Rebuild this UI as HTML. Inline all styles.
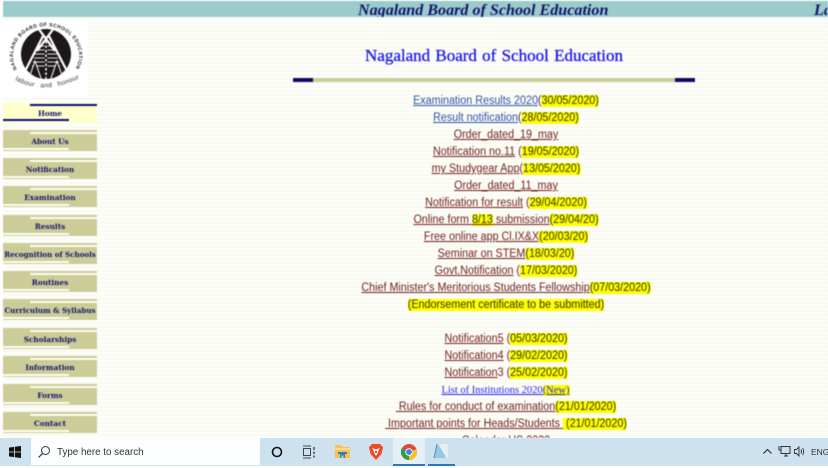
<!DOCTYPE html>
<html><head><meta charset="utf-8">
<style>
html,body{margin:0;padding:0}
body{width:828px;height:466px;overflow:hidden;position:relative;background:#fdfdf6;font-family:"Liberation Sans",sans-serif}
#page{position:absolute;left:0;top:0;width:828px;height:438px;overflow:hidden;filter:blur(.4px);
background:repeating-linear-gradient(0deg,#fefefb 0,#fefefb 2px,#fafaf2 2px,#fafaf2 4px)}
#white{position:absolute;left:0;top:0;width:3px;height:438px;background:#fff}
#bar{position:absolute;left:3px;top:1px;width:825px;height:16px;background:#9bcbcb;overflow:hidden}
.bt{position:absolute;top:-2px;font:italic bold 16.1px/24px "Liberation Serif",serif;color:#14146e;white-space:nowrap}
#h1{position:absolute;left:293px;width:402px;top:46px;text-align:center;font:17px/20px "Liberation Serif",serif;color:#1616ee;-webkit-text-stroke:.3px #1616ee;word-spacing:1px;white-space:nowrap}
#rule{position:absolute;left:293px;top:78px;width:402px;height:4px;background:#cccc99}
#rule i{position:absolute;top:0;width:20px;height:4px;background:#0c0c66}
.l{position:absolute;left:.5px;width:1010px;text-align:center;font-size:11.5px;line-height:17px;color:#702020;white-space:nowrap;transform:scaleX(.934);transform-origin:505px 0}
.l u{color:#702020}
.l u.b{color:#2a55a5}
.l b{font-weight:normal;background:#ffff00;color:#333300}
.n{position:absolute;left:3px;width:94px;height:21px;background:#cccc99;text-align:center;font:bold 7.3px/23px "DejaVu Serif","Liberation Serif",serif;color:#14146e;white-space:nowrap}
.n:before{content:"";position:absolute;left:27px;right:0;top:2px;height:2px;background:#fdfdf0}
.n:after{content:"";position:absolute;left:0;width:66px;top:18px;height:2px;background:#fdfdf0}
.n.h{background:#ffffcc;top:103px;height:20px;line-height:21px}
.n.h:before{background:#0c0c80;top:1px}
.n.h:after{background:#0c0c80;top:16px}
#logo{position:absolute;left:3px;top:21px;width:85px;height:75px;background:#fff}
#task{position:absolute;left:0;top:438px;width:828px;height:28px;background:#cde2ee;filter:blur(.3px)}
#search{position:absolute;left:31px;top:0;width:229px;height:27px;background:#fbfdfe;font-size:9.8px;line-height:30px;color:#333}
#search span{position:absolute;left:26px;white-space:nowrap}
#act{position:absolute;left:393px;top:0;width:32px;height:28px;background:#e4f0f6}
.ul{position:absolute;top:26px;height:2px;background:#2a78c0}
#tray{position:absolute;left:811px;top:0;font-size:8.5px;line-height:28px;color:#333}
svg{position:absolute}
</style></head>
<body>
<div id="page">
<div id="white"></div>
<div id="bar">
<div class="bt" style="left:355px">Nagaland Board of School Education</div>
<div class="bt" style="left:811px">La</div>
</div>

<div id="logo">
<svg width="85" height="75" viewBox="0 0 85 75" style="left:0;top:0">
<defs><clipPath id="c"><circle cx="43" cy="33" r="25"/></clipPath></defs>
<circle cx="43" cy="33" r="25" fill="#1c1818"/>
<g clip-path="url(#c)">
<path d="M35 25h16M33 29h20M32 33h22M31 37h24M30 41h26M29 45h28" stroke="#ddd" stroke-width="1.1"/>
<path d="M43 20V60" stroke="#1c1818" stroke-width="3"/>
<path d="M43 20V60" stroke="#fff" stroke-width="1.5" stroke-dasharray="2.5 2"/>
<path d="M25 60 L32 40 L39 60Z M47 60 L54 40 L61 60Z" fill="#1c1818" stroke="#fff" stroke-width="1"/>
<path d="M35 7 L52 30 M51 7 L34 30" stroke="#fff" stroke-width="2.2"/>
<path d="M40 15 L18 58 M46 15 L68 58" stroke="#fff" stroke-width="2.2"/>
</g>
<path id="arc" d="M14 48 A33 29 0 1 1 72 48" fill="none"/>
<text font-family="Liberation Sans" font-size="5" font-weight="bold" fill="#222" letter-spacing=".45"><textPath href="#arc">NAGALAND BOARD OF SCHOOL EDUCATION</textPath></text>
<path id="arc2" d="M12 59 Q42 75 77 57" fill="none"/>
<text font-family="Liberation Sans" font-size="6.6" fill="#333" letter-spacing=".4" word-spacing="3.5"><textPath href="#arc2">labour and honour</textPath></text>
</svg>
</div>

<div class="n h">Home</div>
<div class="n" style="top:130px">About Us</div>
<div class="n" style="top:158px">Notification</div>
<div class="n" style="top:186px">Examination</div>
<div class="n" style="top:215px">Results</div>
<div class="n" style="top:243px;font-size:7.1px">Recognition of Schools</div>
<div class="n" style="top:271px">Routines</div>
<div class="n" style="top:299px;font-size:7.15px">Curriculum &amp; Syllabus</div>
<div class="n" style="top:328px">Scholarships</div>
<div class="n" style="top:356px">Information</div>
<div class="n" style="top:384px">Forms</div>
<div class="n" style="top:412px">Contact</div>

<div id="h1">Nagaland Board of School Education</div>
<div id="rule"><i style="left:0"></i><i style="right:0"></i></div>

<div class="l" style="top:93px"><u class="b">Examination Results 2020</u>(<b>30/05/2020)</b></div>
<div class="l" style="top:110px"><u class="b">Result notification</u>(<b>28/05/2020)</b></div>
<div class="l" style="top:127px"><u>Order_dated_19_may</u></div>
<div class="l" style="top:144px"><u>Notification no.11</u> (<b>19/05/2020)</b></div>
<div class="l" style="top:161px"><u>my Studygear App</u>(<b>13/05/2020)</b></div>
<div class="l" style="top:178px"><u>Order_dated_11_may</u></div>
<div class="l" style="top:195px"><u>Notification for result</u> (<b>29/04/2020)</b></div>
<div class="l" style="top:212px"><u>Online form <b>8/13</b> submission</u><b>(29/04/20)</b></div>
<div class="l" style="top:229px"><u>Free online app Cl.IX&amp;X</u><b>(20/03/20)</b></div>
<div class="l" style="top:246px"><u>Seminar on STEM</u><b>(18/03/20)</b></div>
<div class="l" style="top:263px"><u>Govt.Notification</u> (<b>17/03/2020)</b></div>
<div class="l" style="top:280px"><u>Chief Minister's Meritorious Students Fellowship</u><b>(07/03/2020)</b></div>
<div class="l" style="top:297px"><b>(Endorsement certificate to be submitted)</b></div>
<div class="l" style="top:331px"><u>Notification5</u> (<b>05/03/2020)</b></div>
<div class="l" style="top:348px"><u>Notification4</u> (<b>29/02/2020)</b></div>
<div class="l" style="top:365px"><u>Notification</u>3 (<b>25/02/2020)</b></div>
<div class="l" style="top:382px;font:10.5px/17px 'Liberation Serif',serif;transform:none"><u style="color:#2222ee">List of Institutions 2020</u><b style="color:#2222ee"><u style="color:#2222ee">(New)</u></b></div>
<div class="l" style="top:399px"><u> &nbsp;Rules for conduct of examination</u><b>(21/01/2020)</b></div>
<div class="l" style="top:416px"><u> &nbsp;Important points for Heads/Students </u><b>&nbsp;(21/01/2020)</b></div>
<div class="l" style="top:433px"><u>Calendar HS 2020</u></div>
</div>

<div id="task">
<svg style="left:9px;top:8px" width="12" height="12" viewBox="0 0 12 12"><path d="M0 1.6L5 .9V5.6H0ZM5.8 .8L12 0V5.6H5.8ZM0 6.4H5V11.1L0 10.4ZM5.8 6.4H12V12L5.8 11.2Z" fill="#111"/></svg>
<div id="search">
<svg style="left:6px;top:7px" width="14" height="14" viewBox="0 0 14 14"><circle cx="8.5" cy="5.5" r="4" fill="none" stroke="#333" stroke-width="1"/><path d="M5.6 8.4L1.5 12.5" stroke="#333" stroke-width="1.2"/></svg>
<span>Type here to search</span>
</div>
<svg style="left:271px;top:8px" width="12" height="12" viewBox="0 0 12 12"><circle cx="6" cy="6" r="4.5" fill="none" stroke="#111" stroke-width="1.6"/></svg>
<svg style="left:302px;top:7px" width="14" height="14" viewBox="0 0 14 14"><path d="M1 1H9M1 13H9" stroke="#444" stroke-width="1"/><rect x="1.5" y="3.5" width="7" height="7" fill="none" stroke="#444"/><path d="M12 2V5M12 6.5V9M12 10.5V12.5" stroke="#444" stroke-width="1.4"/></svg>
<svg style="left:335px;top:6px" width="16" height="15" viewBox="0 0 16 15"><path d="M0 1H6L7.5 3H15V14H0Z" fill="#f3c44f"/><path d="M0 4H15V6H0Z" fill="#f8dc80"/><path d="M5 14V10H10V14H8.6V11.5H6.4V14Z" fill="#2a7fc4"/><path d="M3 8H12V10H3Z" fill="#2a7fc4"/></svg>
<svg style="left:369px;top:6px" width="14" height="16" viewBox="0 0 14 16"><path d="M3 0H11L14 3L12.5 10L7 16L1.5 10L0 3Z" fill="#f04a23"/><path d="M3.5 4L7 5.5L10.5 4L9 8.5L7 12L5 8.5Z" fill="#fff"/><path d="M6 7H8V9H6Z" fill="#f04a23"/></svg>
<div id="act"></div>
<svg style="left:401px;top:6px" width="16" height="16" viewBox="0 0 16 16"><circle cx="8" cy="8" r="8" fill="#dd4b3e"/><path d="M8 8L15.5 5.2A8 8 0 0 1 8 16Z" fill="#f6c324"/><path d="M8 8L8 16A8 8 0 0 1 1 4Z" fill="#2f9e4f"/><circle cx="8" cy="8" r="3.8" fill="#fff"/><circle cx="8" cy="8" r="2.9" fill="#3f7fe0"/></svg>
<svg style="left:433px;top:5px" width="16" height="17" viewBox="0 0 16 17"><path d="M4 1H14L12 15H1Z" fill="#8fcbe4"/><path d="M5 1H14.5L15 14H13Z" fill="#e8eef0"/><path d="M1 15L4 1" stroke="#5a8ea8" stroke-width="1"/></svg>
<div class="ul" style="left:393px;width:32px"></div>
<div class="ul" style="left:428px;width:27px"></div>
<svg style="left:763px;top:10px" width="9" height="7" viewBox="0 0 9 7"><path d="M.5 5.5L4.5 1.5L8.5 5.5" fill="none" stroke="#222" stroke-width="1"/></svg>
<svg style="left:778px;top:7px" width="13" height="13" viewBox="0 0 13 13"><rect x="3" y="1.5" width="9" height="7" fill="none" stroke="#333"/><path d="M1 1V5H3M6 11H10M8 8.5V11" stroke="#333" fill="none"/></svg>
<svg style="left:794px;top:8px" width="12" height="11" viewBox="0 0 12 11"><path d="M.5 3.5H2.5L5 1V10L2.5 7.5H.5Z" fill="none" stroke="#333" stroke-width=".9"/><path d="M7 3.5Q8 5.5 7 7.5M8.7 2Q10.4 5.5 8.7 9" fill="none" stroke="#333" stroke-width=".9"/></svg>
<div id="tray">ENG</div>
</div>
</body></html>
